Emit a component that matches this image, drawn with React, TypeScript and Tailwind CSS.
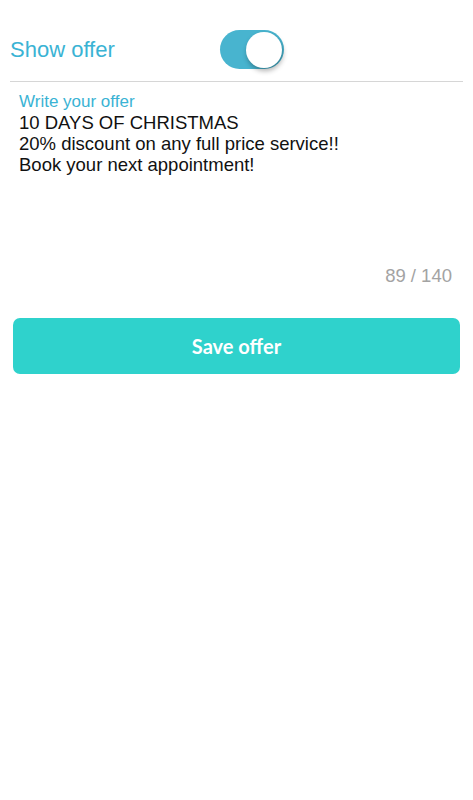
import { useState } from "react";

export default function App() {
  const [on, setOn] = useState(true);
  const text =
    "10 DAYS OF CHRISTMAS\n20% discount on any full price service!!\nBook your next appointment!";

  return (
    <div className="min-h-[800px] w-full bg-white font-['Liberation_Sans',Arial,sans-serif]">
      <div className="flex items-center pt-[30px] pb-[12px] pl-[10px] pr-4">
        <span className="w-[210px] text-[22px] leading-none text-[#3ab3d4]">Show offer</span>
        <button
          onClick={() => setOn(!on)}
          className={`relative h-[39px] w-[64px] rounded-full ${on ? "bg-[#48b4cf]" : "bg-gray-200"}`}
        >
          <span
            className={`absolute top-[1.5px] h-[36px] w-[36px] rounded-full bg-white shadow-[1px_3px_5px_rgba(0,0,0,0.3)] ${on ? "left-[26px]" : "left-[2px]"}`}
          />
        </button>
      </div>
      <div className="mx-[10px] h-px bg-[#d6d6d6]" />

      <div className="px-[19px] pt-[10px]">
        <div className="text-[17px] leading-[19px] text-[#3ab3d4]">Write your offer</div>
        <div className="mt-[1px] h-[153px] whitespace-pre-line text-[18.5px] leading-[21px] text-[#111]">
          {text}
        </div>
        <div className="pr-[2px] text-right text-[18.5px] leading-[22px] text-[#a3a3a3]">89 / 140</div>
      </div>

      <div className="px-[13px] pt-[31px]">
        <button className="flex h-[56px] w-full items-center justify-center rounded-[7px] bg-[#2fd2cc] font-['Lato',sans-serif] text-[20px] font-bold text-white">
          Save offer
        </button>
      </div>
    </div>
  );
}
